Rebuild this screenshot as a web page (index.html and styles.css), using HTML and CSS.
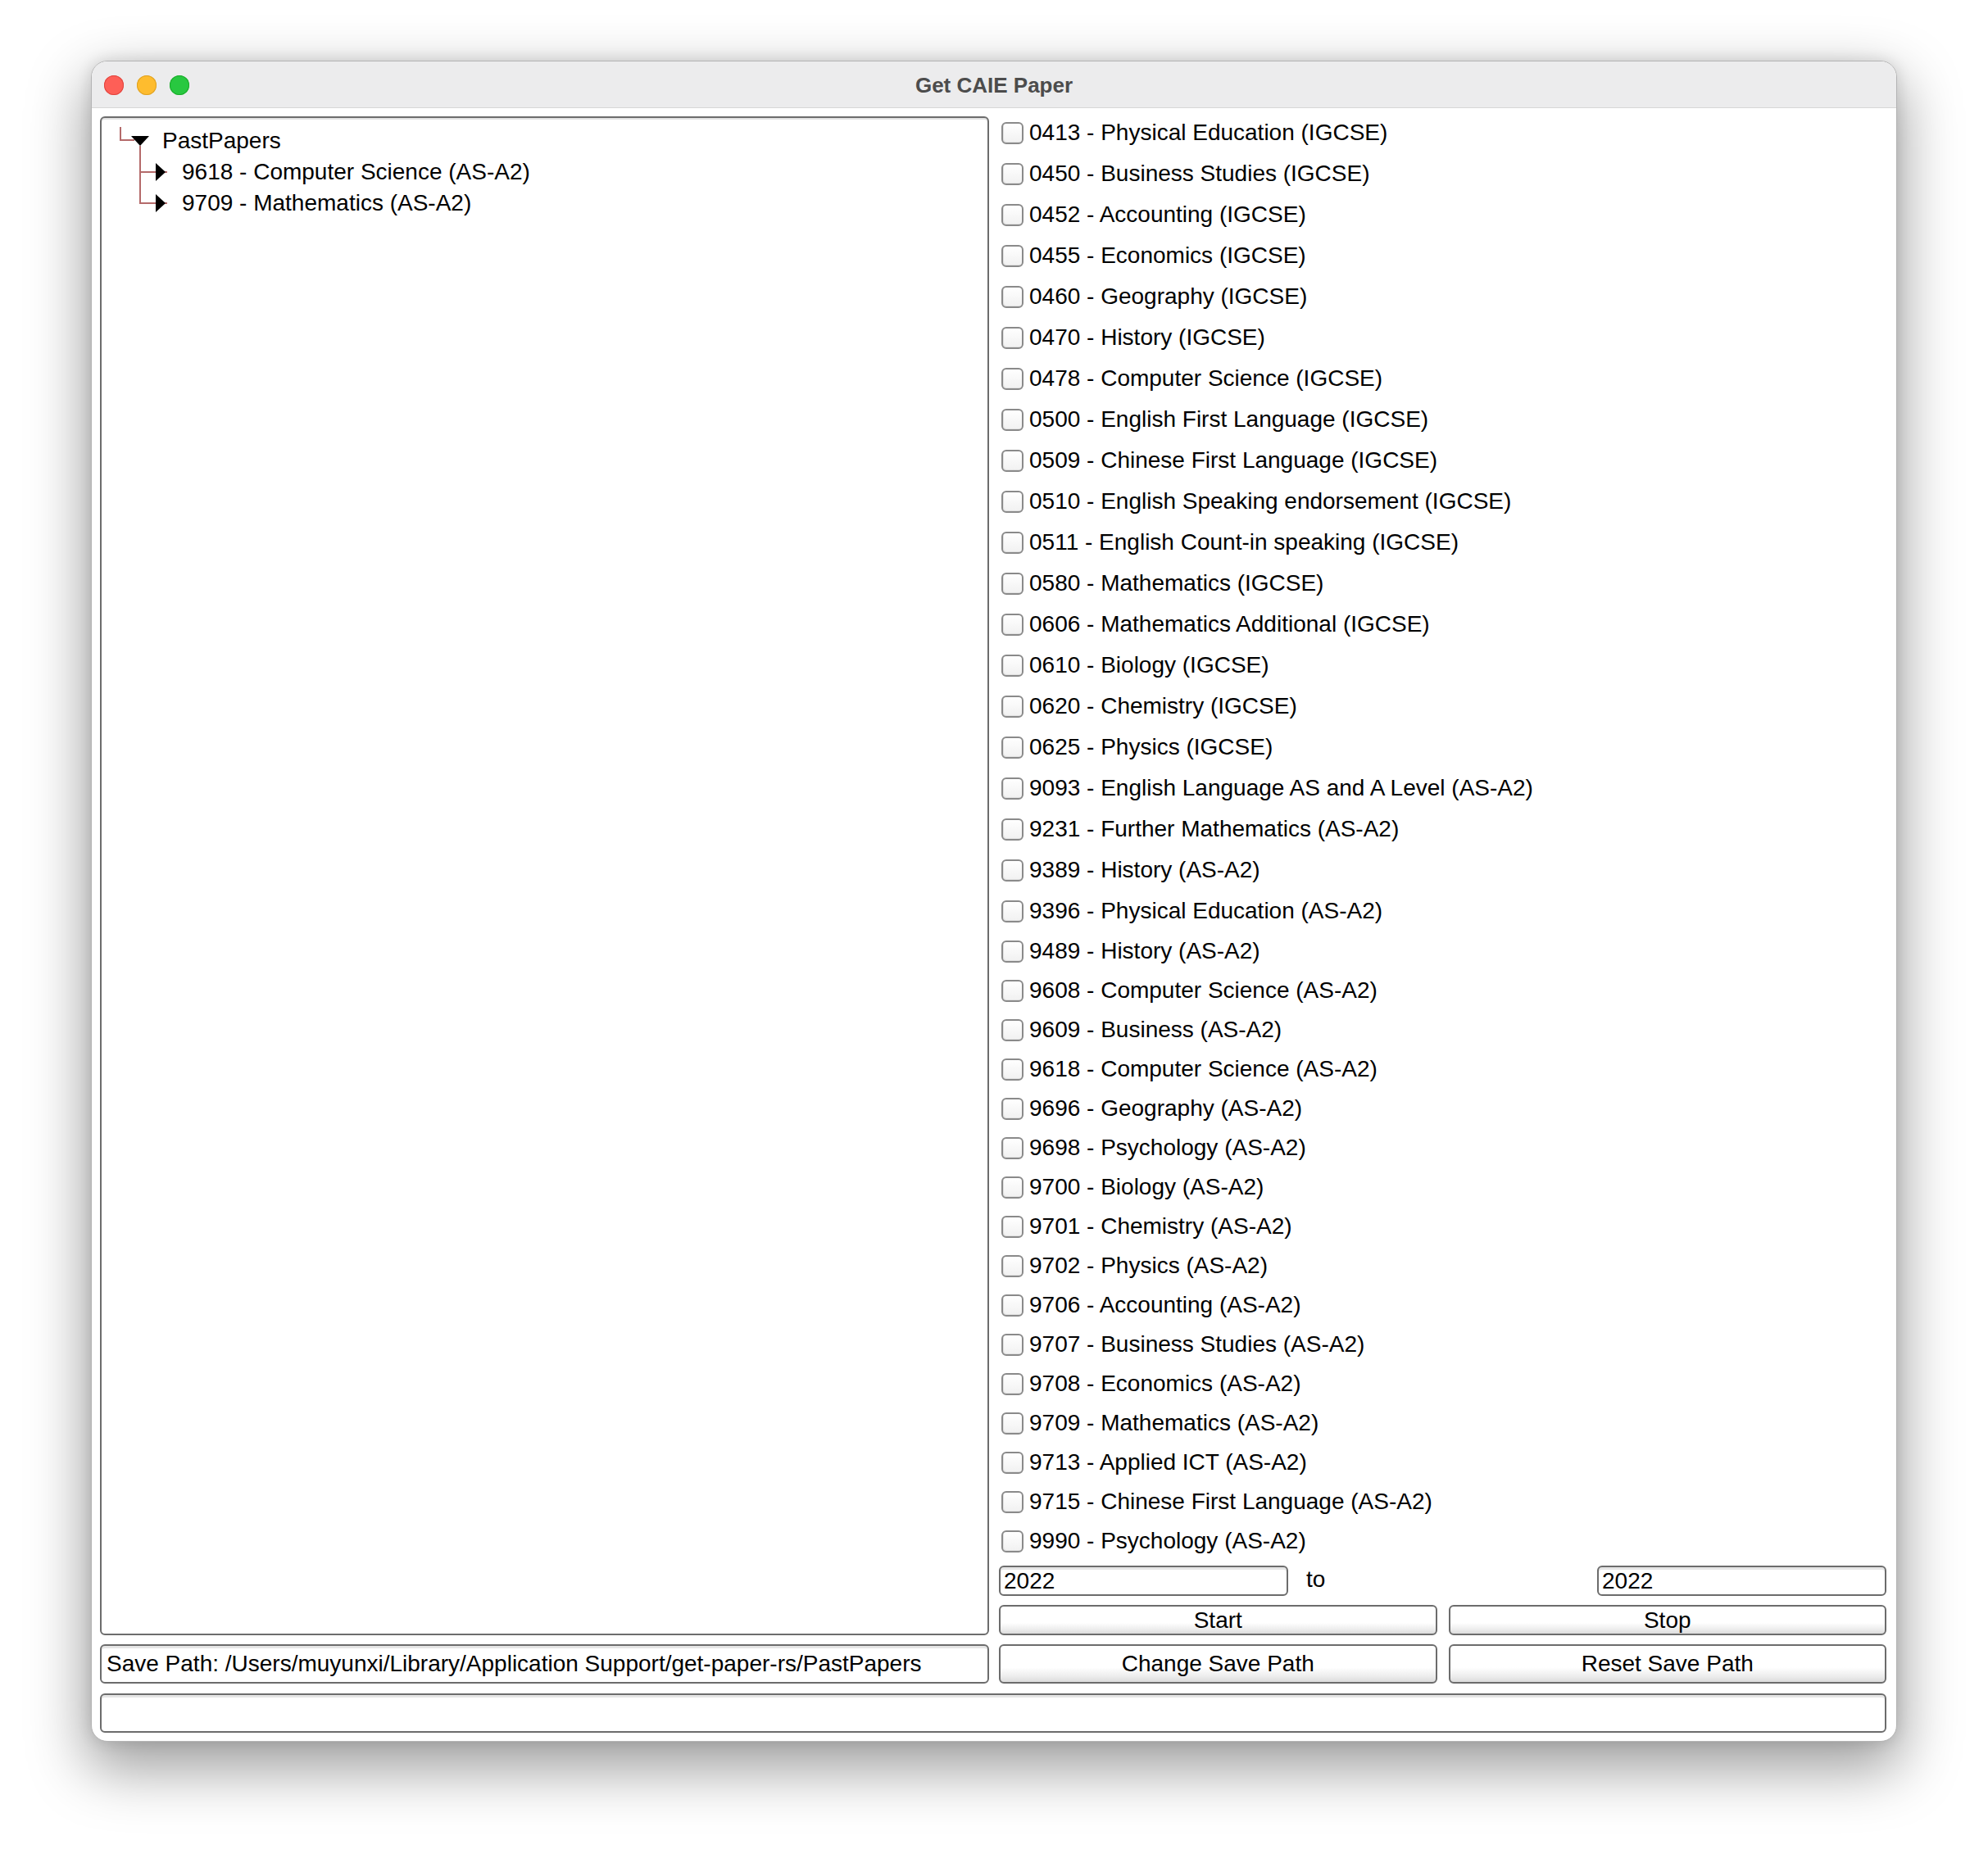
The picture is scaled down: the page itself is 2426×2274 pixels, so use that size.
FILE: index.html
```html
<!DOCTYPE html>
<html>
<head>
<meta charset="utf-8">
<title>Get CAIE Paper</title>
<link rel="stylesheet" href="styles.css">
</head>
<body>
<div class="window">
  <div class="titlebar">
    <div class="lights">
      <span class="light red"></span>
      <span class="light yellow"></span>
      <span class="light green"></span>
    </div>
    <div class="title">Get CAIE Paper</div>
    <div></div>
  </div>
  <div class="content">
    <div class="top">
      <div class="tree">
        <div class="tree-row">
          <svg class="conn root" width="74" height="38" viewBox="0 0 74 38">
            <path d="M23 2 V18 H40 M47 25 V38" stroke="#b46a6a" stroke-width="2" fill="none"/>
            <polygon points="36,13 58,13 47,25" fill="#000"/>
          </svg>
          <span class="tree-label">PastPapers</span>
        </div>
        <div class="tree-row">
          <svg class="conn child" width="98" height="38" viewBox="0 0 98 38">
            <path d="M47 0 V38 M47 19 H80" stroke="#b46a6a" stroke-width="2" fill="none"/>
            <polygon points="66,8 78,19 66,30" fill="#000"/>
          </svg>
          <span class="tree-label">9618 - Computer Science (AS-A2)</span>
        </div>
        <div class="tree-row">
          <svg class="conn child" width="98" height="38" viewBox="0 0 98 38">
            <path d="M47 0 V19 H80" stroke="#b46a6a" stroke-width="2" fill="none"/>
            <polygon points="66,8 78,19 66,30" fill="#000"/>
          </svg>
          <span class="tree-label">9709 - Mathematics (AS-A2)</span>
        </div>
      </div>
      <div class="right">
        <div class="list">
          <label class="row"><span class="box"></span><span>0413 - Physical Education (IGCSE)</span></label>
          <label class="row"><span class="box"></span><span>0450 - Business Studies (IGCSE)</span></label>
          <label class="row"><span class="box"></span><span>0452 - Accounting (IGCSE)</span></label>
          <label class="row"><span class="box"></span><span>0455 - Economics (IGCSE)</span></label>
          <label class="row"><span class="box"></span><span>0460 - Geography (IGCSE)</span></label>
          <label class="row"><span class="box"></span><span>0470 - History (IGCSE)</span></label>
          <label class="row"><span class="box"></span><span>0478 - Computer Science (IGCSE)</span></label>
          <label class="row"><span class="box"></span><span>0500 - English First Language (IGCSE)</span></label>
          <label class="row"><span class="box"></span><span>0509 - Chinese First Language (IGCSE)</span></label>
          <label class="row"><span class="box"></span><span>0510 - English Speaking endorsement (IGCSE)</span></label>
          <label class="row"><span class="box"></span><span>0511 - English Count-in speaking (IGCSE)</span></label>
          <label class="row"><span class="box"></span><span>0580 - Mathematics (IGCSE)</span></label>
          <label class="row"><span class="box"></span><span>0606 - Mathematics Additional (IGCSE)</span></label>
          <label class="row"><span class="box"></span><span>0610 - Biology (IGCSE)</span></label>
          <label class="row"><span class="box"></span><span>0620 - Chemistry (IGCSE)</span></label>
          <label class="row"><span class="box"></span><span>0625 - Physics (IGCSE)</span></label>
          <label class="row"><span class="box"></span><span>9093 - English Language AS and A Level (AS-A2)</span></label>
          <label class="row"><span class="box"></span><span>9231 - Further Mathematics (AS-A2)</span></label>
          <label class="row"><span class="box"></span><span>9389 - History (AS-A2)</span></label>
          <label class="row"><span class="box"></span><span>9396 - Physical Education (AS-A2)</span></label>
          <label class="row"><span class="box"></span><span>9489 - History (AS-A2)</span></label>
          <label class="row"><span class="box"></span><span>9608 - Computer Science (AS-A2)</span></label>
          <label class="row"><span class="box"></span><span>9609 - Business (AS-A2)</span></label>
          <label class="row"><span class="box"></span><span>9618 - Computer Science (AS-A2)</span></label>
          <label class="row"><span class="box"></span><span>9696 - Geography (AS-A2)</span></label>
          <label class="row"><span class="box"></span><span>9698 - Psychology (AS-A2)</span></label>
          <label class="row"><span class="box"></span><span>9700 - Biology (AS-A2)</span></label>
          <label class="row"><span class="box"></span><span>9701 - Chemistry (AS-A2)</span></label>
          <label class="row"><span class="box"></span><span>9702 - Physics (AS-A2)</span></label>
          <label class="row"><span class="box"></span><span>9706 - Accounting (AS-A2)</span></label>
          <label class="row"><span class="box"></span><span>9707 - Business Studies (AS-A2)</span></label>
          <label class="row"><span class="box"></span><span>9708 - Economics (AS-A2)</span></label>
          <label class="row"><span class="box"></span><span>9709 - Mathematics (AS-A2)</span></label>
          <label class="row"><span class="box"></span><span>9713 - Applied ICT (AS-A2)</span></label>
          <label class="row"><span class="box"></span><span>9715 - Chinese First Language (AS-A2)</span></label>
          <label class="row"><span class="box"></span><span>9990 - Psychology (AS-A2)</span></label>
        </div>
        <div class="years">
          <div class="field input">2022</div>
          <div class="to">to</div>
          <div class="field input">2022</div>
        </div>
        <div class="pair actions">
          <div class="button">Start</div>
          <div class="button">Stop</div>
        </div>
      </div>
    </div>
    <div class="saverow">
      <div class="field path">Save Path: /Users/muyunxi/Library/Application Support/get-paper-rs/PastPapers</div>
      <div class="pair">
        <div class="button">Change Save Path</div>
        <div class="button">Reset Save Path</div>
      </div>
    </div>
    <div class="field status"></div>
  </div>
</div>
</body>
</html>
```

FILE: styles.css
```css
* { box-sizing: border-box; }

html, body {
  margin: 0;
  background: #ffffff;
}

body {
  width: 2426px;
  height: 2274px;
  padding: 74px 0 0 111px;
  font-family: "Liberation Sans", Arial, Helvetica, sans-serif;
  font-size: 28px;
  color: #000;
  overflow: hidden;
}

.window {
  width: 2204px;
  height: 2052px;
  border: 1px solid #b4b4b4;
  border-radius: 20px;
  background: #ffffff;
  overflow: hidden;
  box-shadow: 0 28px 70px 6px rgba(0, 0, 0, 0.38), 0 0 18px rgba(0, 0, 0, 0.12);
}

.titlebar {
  height: 57px;
  background: #ececed;
  border-bottom: 1px solid #d6d6d6;
  display: grid;
  grid-template-columns: 1fr auto 1fr;
  align-items: center;
}

.lights {
  display: flex;
  gap: 16px;
  padding-left: 15px;
  padding-top: 2px;
}

.light {
  width: 24px;
  height: 24px;
  border-radius: 50%;
  display: block;
}

.red { background: #fe5f57; box-shadow: inset 0 0 0 1px #e0443e; }
.yellow { background: #febc2e; box-shadow: inset 0 0 0 1px #dea123; }
.green { background: #28c840; box-shadow: inset 0 0 0 1px #1aab29; }

.title {
  font-weight: bold;
  font-size: 26px;
  color: #4c4c4c;
  padding-top: 2px;
}

.content {
  padding: 0 12px 10px 10px;
  display: flex;
  flex-direction: column;
}

.top {
  display: grid;
  grid-template-columns: 1085px 1fr;
  column-gap: 12px;
}

.tree {
  margin-top: 10px;
  height: 1854px;
  border: 2px solid #6c6c6c;
  border-radius: 6px;
  background: #fff;
  box-shadow: inset 0 2px 0 #e2e2e2;
  padding-top: 9px;
  display: flex;
  flex-direction: column;
}

.tree-row {
  height: 38px;
  display: flex;
  align-items: center;
  line-height: 38px;
}

.conn { display: block; flex: none; }

.right {
  padding-top: 5px;
  display: flex;
  flex-direction: column;
}

.list {
  display: flex;
  flex-direction: column;
  padding-left: 3px;
}

.row {
  height: 50px;
  display: flex;
  align-items: center;
  gap: 7px;
  white-space: nowrap;
}

.row:nth-child(n+21) {
  height: 48px;
}

.box {
  width: 27px;
  height: 27px;
  flex: none;
  border: 2px solid #8a8a8a;
  border-radius: 6px;
  background: linear-gradient(#ffffff, #f1f1f1);
  box-shadow: inset 1px -1px 0 #e2e2e2;
}

.field {
  border: 2px solid #6c6c6c;
  border-radius: 6px;
  background: #fff;
  box-shadow: inset 0 3px 0 #e6e6e6;
  white-space: nowrap;
}

.years {
  margin-top: 6px;
  height: 36px;
  display: grid;
  grid-template-columns: 1fr 1fr 1fr;
  column-gap: 12px;
}

.input {
  padding-left: 4px;
  line-height: 32px;
  padding-top: 1px;
}

.to {
  padding-left: 10px;
  line-height: 34px;
}

.pair {
  display: grid;
  grid-template-columns: 1fr 1fr;
  column-gap: 14px;
}

.actions {
  margin-top: 12px;
  height: 37px;
}

.button {
  border: 2px solid #6c6c6c;
  border-radius: 6px;
  background: linear-gradient(to bottom, #ffffff 0%, #ffffff 60%, #ececec 85%, #dcdcdc 100%);
  display: flex;
  align-items: center;
  justify-content: center;
  white-space: nowrap;
}

.saverow {
  margin-top: 11px;
  height: 48px;
  display: grid;
  grid-template-columns: 1085px 1fr;
  column-gap: 12px;
}

.path {
  padding-left: 6px;
  display: flex;
  align-items: center;
}

.status {
  margin-top: 12px;
  height: 48px;
}
```
